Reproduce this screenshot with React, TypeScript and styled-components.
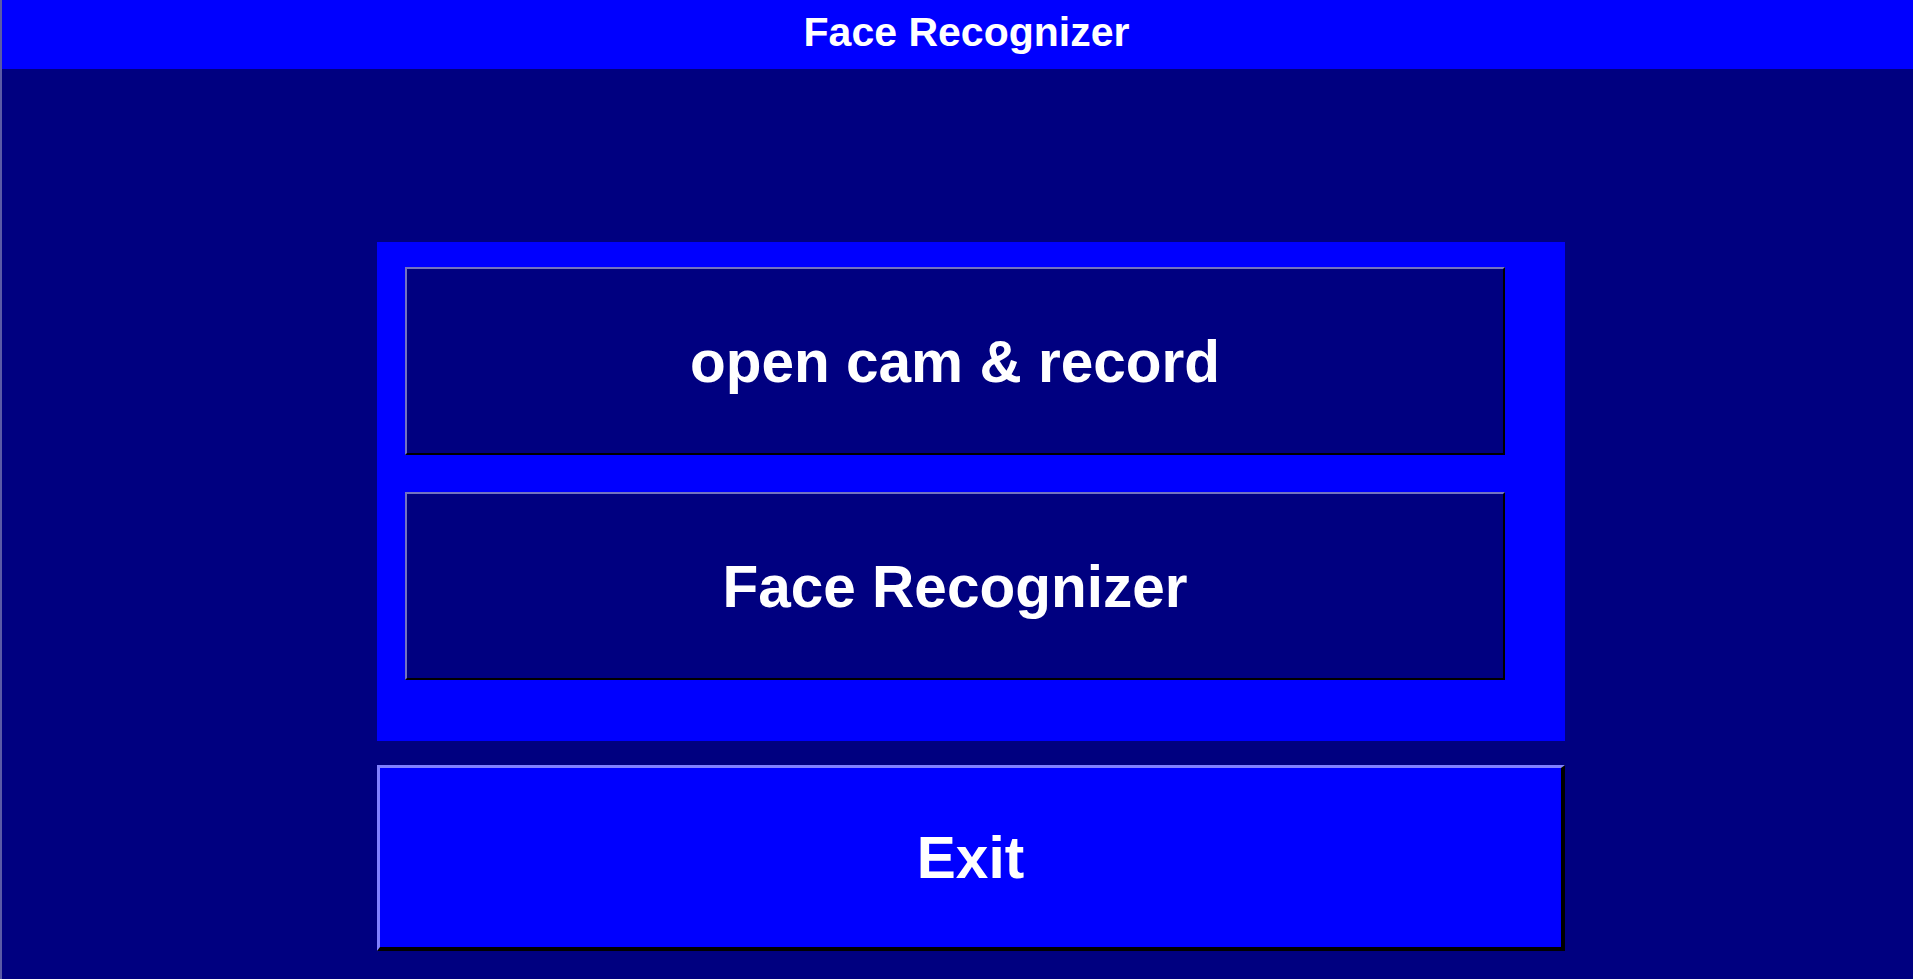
import styled, { createGlobalStyle } from 'styled-components';

const GlobalStyle = createGlobalStyle`
	html, body {
		margin: 0;
		padding: 0;
		height: 100%;
		background-color: #000080;
		font-family: 'Liberation Sans', Arial, sans-serif;
	}
	#root {
		height: 100%;
	}
`;

const Window = styled.div`
	width: 100%;
	height: 100vh;
	box-sizing: border-box;
	display: flex;
	flex-direction: column;
	background-color: #000080;
	border-left: 2px solid #5a5aa6;
	overflow: hidden;
`;

const Header = styled.div`
	height: 69px;
	box-sizing: border-box;
	flex-shrink: 0;
	display: flex;
	align-items: center;
	justify-content: center;
	padding: 0 0 4px 18px;
	background-color: #0000ff;
	color: #ffffff;
	font-size: 41px;
	font-weight: bold;
`;

const Content = styled.div`
	display: flex;
	flex-direction: column;
	gap: 24px;
	width: 1188px;
	padding-top: 173px;
	margin-left: 375px;
`;

const Panel = styled.div`
	display: flex;
	flex-direction: column;
	gap: 37px;
	padding: 25px 60px 61px 28px;
	background-color: #0000ff;
`;

const MenuButton = styled.button`
	height: 188px;
	box-sizing: border-box;
	display: flex;
	align-items: center;
	justify-content: center;
	background-color: #000080;
	color: #ffffff;
	font-family: 'Liberation Sans', Arial, sans-serif;
	font-size: 58.5px;
	font-weight: bold;
	border-style: solid;
	border-width: 2px;
	border-color: #7373c0 #000000 #000000 #7373c0;
	cursor: pointer;
`;

const ExitButton = styled.button`
	height: 186px;
	box-sizing: border-box;
	display: flex;
	align-items: center;
	justify-content: center;
	background-color: #0000ff;
	color: #ffffff;
	font-family: 'Liberation Sans', Arial, sans-serif;
	font-size: 58.5px;
	font-weight: bold;
	border-style: solid;
	border-width: 3px 4px 4px 3px;
	border-color: #8080ff #000000 #000000 #8080ff;
	cursor: pointer;
`;

const App = () => {
	return (
		<>
			<GlobalStyle />
			<Window>
				<Header>Face Recognizer</Header>
				<Content>
					<Panel>
						<MenuButton>open cam &amp; record</MenuButton>
						<MenuButton>Face Recognizer</MenuButton>
					</Panel>
					<ExitButton>Exit</ExitButton>
				</Content>
			</Window>
		</>
	);
};

export default App;
